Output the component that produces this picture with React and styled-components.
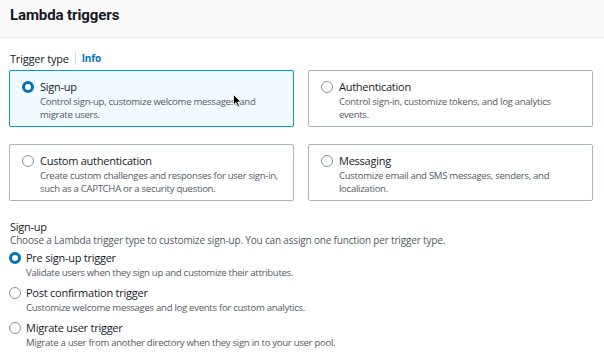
import React from 'react';
import styled, { createGlobalStyle } from 'styled-components';

const GlobalStyle = createGlobalStyle`
  body {
    margin: 0;
    background: #ffffff;
    font-family: "Open Sans", "Liberation Sans", sans-serif;
    color: #16191f;
  }
`;

const Page = styled.div`
  width: 604px;
  height: 352px;
  overflow: hidden;
  position: relative;
`;

const Header = styled.div`
  height: 38px;
  box-sizing: border-box;
  background: #fafafa;
  border-bottom: 1px solid #eaeded;
  display: flex;
  align-items: flex-start;
  padding: 6px 0 0 10px;
`;

const Title = styled.h2`
  margin: 0;
  font-family: Roboto, "Open Sans", sans-serif;
  font-size: 15px;
  letter-spacing: -0.1px;
  font-weight: 700;
  color: #16191f;
`;

const Body = styled.div`
  padding: 12px 11px 0 9px;
`;

const LabelRow = styled.div`
  display: flex;
  align-items: center;
  height: 16px;
  font-size: 11px;
  letter-spacing: -0.2px;
  padding-left: 1px;
`;

const Divider = styled.span`
  width: 1px;
  height: 13px;
  background: #d5dbdb;
  margin: 0 6px 0 6px;
`;

const InfoLink = styled.span`
  color: #0073bb;
  font-weight: 700;
  font-size: 10px;
`;

const Grid = styled.div`
  display: grid;
  grid-template-columns: 1fr 1fr;
  column-gap: 14px;
  row-gap: 17px;
  margin-top: 4px;
`;

const Card = styled.div`
  height: 57px;
  box-sizing: border-box;
  border: 1px solid ${(p) => (p.$selected ? '#00a1c9' : '#aab7b8')};
  background: ${(p) => (p.$selected ? '#f1faff' : '#ffffff')};
  border-radius: 2px;
  display: flex;
  gap: 6px;
  padding: 9px 10px 0 12px;
`;

const RadioDot = styled.span`
  flex: none;
  width: 12px;
  height: 12px;
  box-sizing: border-box;
  border-radius: 50%;
  margin-top: 1px;
  background: #ffffff;
  border: ${(p) => (p.$checked ? '3.5px solid #0073bb' : '1px solid #879596')};
`;

const TextCol = styled.div`
  display: flex;
  flex-direction: column;
`;

const OptionTitle = styled.div`
  font-size: 11px;
  letter-spacing: -0.25px;
  line-height: 14px;
  color: #16191f;
`;

const OptionDesc = styled.div`
  font-size: 9.6px;
  letter-spacing: -0.3px;
  line-height: 13px;
  color: #545b64;
  margin-top: 1px;
`;

const Section = styled.div`
  margin-top: 19px;
`;

const SectionTitle = styled.div`
  font-size: 11px;
  letter-spacing: -0.25px;
  line-height: 14px;
  padding-left: 1px;
`;

const SectionDesc = styled.div`
  font-size: 10px;
  letter-spacing: -0.17px;
  line-height: 13px;
  color: #545b64;
  padding-left: 1px;
`;

const RadioList = styled.div`
  display: flex;
  flex-direction: column;
  gap: 7px;
  margin-top: 4px;
`;

const RadioRow = styled.div`
  display: flex;
  gap: 5px;
`;

const Cursor = styled.svg`
  position: absolute;
  left: 233px;
  top: 94px;
`;

const cards = [
  {
    title: 'Sign-up',
    desc: 'Control sign-up, customize welcome messages, and migrate users.',
    selected: true,
  },
  {
    title: 'Authentication',
    desc: 'Control sign-in, customize tokens, and log analytics events.',
  },
  {
    title: 'Custom authentication',
    desc: 'Create custom challenges and responses for user sign-in, such as a CAPTCHA or a security question.',
  },
  {
    title: 'Messaging',
    desc: 'Customize email and SMS messages, senders, and localization.',
  },
];

const triggers = [
  {
    title: 'Pre sign-up trigger',
    desc: 'Validate users when they sign up and customize their attributes.',
    checked: true,
  },
  {
    title: 'Post confirmation trigger',
    desc: 'Customize welcome messages and log events for custom analytics.',
  },
  {
    title: 'Migrate user trigger',
    desc: 'Migrate a user from another directory when they sign in to your user pool.',
  },
];

export default function App() {
  return (
    <Page>
      <GlobalStyle />
      <Header>
        <Title>Lambda triggers</Title>
      </Header>
      <Body>
        <LabelRow>
          Trigger type
          <Divider />
          <InfoLink>Info</InfoLink>
        </LabelRow>
        <Grid>
          {cards.map((c) => (
            <Card key={c.title} $selected={c.selected}>
              <RadioDot $checked={c.selected} />
              <TextCol>
                <OptionTitle>{c.title}</OptionTitle>
                <OptionDesc>{c.desc}</OptionDesc>
              </TextCol>
            </Card>
          ))}
        </Grid>
        <Section>
          <SectionTitle>Sign-up</SectionTitle>
          <SectionDesc>
            Choose a Lambda trigger type to customize sign-up. You can assign one function per trigger type.
          </SectionDesc>
          <RadioList>
            {triggers.map((t) => (
              <RadioRow key={t.title}>
                <RadioDot $checked={t.checked} />
                <TextCol>
                  <OptionTitle>{t.title}</OptionTitle>
                  <OptionDesc>{t.desc}</OptionDesc>
                </TextCol>
              </RadioRow>
            ))}
          </RadioList>
        </Section>
      </Body>
      <Cursor width="9" height="14" viewBox="0 0 9 14">
        <path d="M0.5 0.5 L0.5 11 L3 8.6 L5 13 L6.6 12.3 L4.7 8 L8 8 Z" fill="#000" stroke="#fff" strokeWidth="0.8" />
      </Cursor>
    </Page>
  );
}
